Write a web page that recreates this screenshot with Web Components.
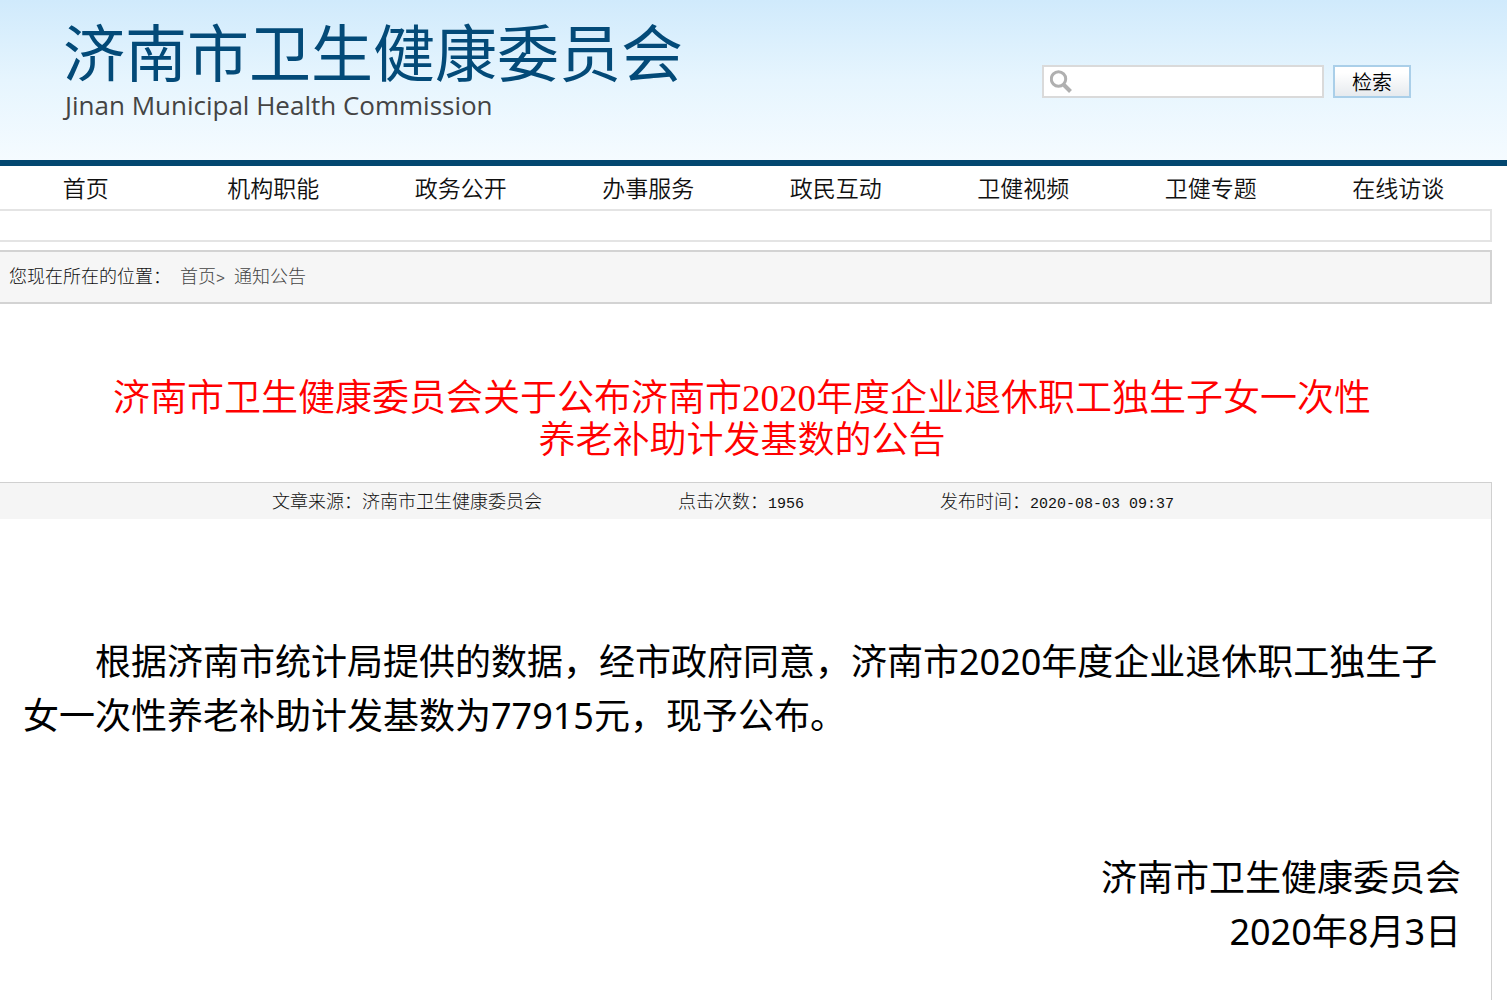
<!DOCTYPE html>
<html lang="zh-CN">
<head>
<meta charset="utf-8">
<title>济南市卫生健康委员会</title>
<style>
body{margin:0;background:#fff;color:#000;overflow-x:hidden;font-family:"Noto Sans","Noto Sans CJK SC",sans-serif}
</style>
</head>
<body>
<health-page></health-page>
<script>
const define = (name, html) => {
  const t = document.createElement('template');
  t.innerHTML = html;
  customElements.define(name, class extends HTMLElement {
    constructor() {
      super();
      this.attachShadow({mode: 'open'}).appendChild(t.content.cloneNode(true));
    }
  });
};

define('site-search', `
<style>
:host{display:block}
form{display:flex;gap:9px;margin:0}
.field{display:flex;align-items:center;box-sizing:border-box;width:282px;height:33px;border:2px solid #dadada;background:#fff;padding-left:6px}
svg{flex:none;width:22px;height:24px}
input{flex:1;min-width:0;height:100%;box-sizing:border-box;border:0;outline:0;background:none;font:20px "Noto Sans CJK SC",sans-serif;padding:0 6px}
button{box-sizing:border-box;width:78px;height:33px;padding:0;border:2px solid #aacfe9;background:linear-gradient(#fff 20%,#e6eaee);color:#000;font:350 20px/29px "Noto Sans CJK SC",sans-serif}
</style>
<form>
<div class="field">
<svg viewBox="0 0 22 24" fill="none" stroke="#b0b0b0"><circle cx="8.5" cy="9" r="7.2" stroke-width="3"/><path d="M14 15 20.5 21.5" stroke-width="4"/></svg>
<input type="text" aria-label="检索">
</div>
<button type="button">检索</button>
</form>`);

define('site-header', `
<style>
:host{display:block}
header{display:flex;justify-content:space-between;align-items:flex-start;box-sizing:border-box;height:166px;border-bottom:6px solid #034770;background:linear-gradient(#d0eafc,#e6f5fe 50%,#f5fbff);padding:0 96px 0 63px}
h1{margin:5px 0 0;color:#034a78;font:400 62px/90px "Noto Sans CJK SC",sans-serif;white-space:nowrap}
p{margin:0;padding-left:2px;color:#444;font:400 26px/20px "Open Sans","Noto Sans",sans-serif}
site-search{margin-top:65px}
</style>
<header>
<div><h1><slot></slot></h1><p><slot name="english"></slot></p></div>
<site-search></site-search>
</header>`);

define('site-nav', `
<style>
:host{display:block}
nav{display:flex;height:43px}
::slotted(a){flex:1;text-align:center;color:#111;text-decoration:none;font:350 23px/42px "Noto Sans CJK SC",sans-serif}
</style>
<nav><slot></slot></nav>`);

define('bread-crumb', `
<style>
:host{display:block}
.notice{height:29px;border:2px solid #e4e4e4}
nav{display:flex;align-items:baseline;box-sizing:border-box;height:54px;margin-top:8px;padding:10px 0 0 15px;border:2px solid #d3d3d3;background:#f6f6f6;color:#111;font:300 18px/26px "Noto Sans CJK SC",sans-serif}
a{color:#444;text-decoration:none}
b{width:18px;font:300 15px/26px "Liberation Mono",monospace;color:#555}
.home{margin-left:9px}
</style>
<div class="notice"></div>
<nav><span>您现在所在的位置：</span><a class="home" href="#">首页</a><b>&gt;</b><a href="#">通知公告</a></nav>`);

define('meta-item', `
<style>
:host{display:block;white-space:nowrap;font:300 18px/26px "Noto Sans CJK SC",sans-serif}
::slotted(span){font:15px/20px "Liberation Mono",monospace}
</style>
<slot></slot>`);

define('notice-article', `
<style>
:host{display:block}
h2{margin:74px 0 20px;color:#f00;text-align:center;font:350 37px/42px "Liberation Serif","Noto Sans CJK SC",serif}
.frame{border:1px solid #d0d0d0;border-bottom:0;min-height:560px}
.meta{display:flex;justify-content:center;gap:136px;box-sizing:border-box;height:36px;padding:4px 38px 0 0;background:#f5f5f5;color:#111}
.body{padding:116px 30px 40px;font:400 36px/54px "Noto Sans","Noto Sans CJK SC",sans-serif}
::slotted(p){margin:0 0 108px;text-indent:2em}
.sign{text-align:right}
</style>
<h2><slot name="title"></slot></h2>
<div class="frame">
<div class="meta"><slot name="meta"></slot></div>
<div class="body"><slot></slot><div class="sign"><slot name="sign"></slot></div></div>
</div>`);

define('health-page', `
<style>
:host{display:block}
main{margin:0 15px 0 -8px}
</style>
<site-header>济南市卫生健康委员会<span slot="english">Jinan Municipal Health Commission</span></site-header>
<main>
<site-nav><a href="#">首页</a><a href="#">机构职能</a><a href="#">政务公开</a><a href="#">办事服务</a><a href="#">政民互动</a><a href="#">卫健视频</a><a href="#">卫健专题</a><a href="#">在线访谈</a></site-nav>
<bread-crumb></bread-crumb>
<notice-article>
<span slot="title">济南市卫生健康委员会关于公布济南市2020年度企业退休职工独生子女一次性<br>养老补助计发基数的公告</span>
<meta-item slot="meta">文章来源：济南市卫生健康委员会</meta-item>
<meta-item slot="meta">点击次数：<span>1956</span></meta-item>
<meta-item slot="meta">发布时间：<span>2020-08-03 09:37</span></meta-item>
<p>根据济南市统计局提供的数据，经市政府同意，济南市2020年度企业退休职工独生子女一次性养老补助计发基数为77915元，现予公布。</p>
<div slot="sign">济南市卫生健康委员会</div>
<div slot="sign">2020年8月3日</div>
</notice-article>
</main>`);
</script>
</body>
</html>
